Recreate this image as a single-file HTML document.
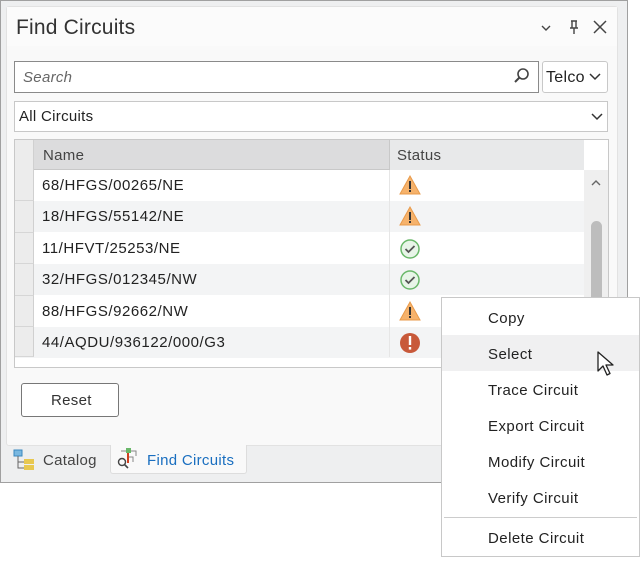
<!DOCTYPE html>
<html><head><style>
*{box-sizing:border-box;margin:0;padding:0}
body{width:641px;height:561px;background:#fff;position:relative;overflow:hidden;font-family:"Liberation Sans",sans-serif;color:#222}
.a{position:absolute}
.frame{left:0;top:0;width:628px;height:483px;background:#eeeff0;border:1px solid #a0a0a0}
.panel{left:6px;top:6px;width:612px;height:440px;background:#f9f9f9;border:1px solid #e2e2e2;border-radius:3px}
.t{font-size:15px;white-space:nowrap;letter-spacing:0.3px}
.row{left:15px;width:569px;height:31px}
.sel{left:15px;width:19px;background:#ececec;border-right:1px solid #d0d0d0;border-bottom:1px solid #d6d6d6}
.nm{left:42px;font-size:15px;letter-spacing:0.55px}
.mi{left:488px;font-size:15px;letter-spacing:0.45px}
</style></head><body>
<div class="a frame"></div>
<div class="a panel"></div>
<div class="a" style="left:7px;top:7px;width:610px;height:39px;background:#fbfbfb"></div>
<div class="a" style="left:16px;top:16px;font-size:21px;color:#333;letter-spacing:0.2px">Find Circuits</div>
<svg class="a" style="left:540px;top:18px" width="70" height="20" viewBox="0 0 70 20">
<path d="M2 8l4 4 4-4" stroke="#444" stroke-width="1.4" fill="none"/>
<path d="M31 3h6M32 3v7M36 3v7M30 10h8M34 10v6" stroke="#444" stroke-width="1.4" fill="none"/>
<path d="M54 3l12 12M66 3l-12 12" stroke="#444" stroke-width="1.5"/>
</svg>
<div class="a" style="left:14px;top:61px;width:525px;height:32px;background:#fff;border:1px solid #8a8a8a"></div>
<div class="a t" style="left:23px;top:69px;font-style:italic;color:#666">Search</div>
<svg class="a" style="left:512px;top:67px" width="18" height="18"><circle cx="11" cy="7" r="5" stroke="#444" stroke-width="1.6" fill="none"/><path d="M7.5 10.5L3 15" stroke="#444" stroke-width="2"/></svg>
<div class="a" style="left:542px;top:61px;width:66px;height:32px;background:#fff;border:1px solid #c8c8c8;border-radius:3px"></div>
<div class="a t" style="left:546px;top:69px;font-size:16px">Telco</div>
<svg class="a" style="left:589px;top:72px" width="12" height="10"><path d="M1 2l5 5 5-5" stroke="#333" stroke-width="1.5" fill="none"/></svg>
<div class="a" style="left:14px;top:101px;width:594px;height:31px;background:#fff;border:1px solid #c8c8c8"></div>
<div class="a t" style="left:19px;top:108px">All Circuits</div>
<svg class="a" style="left:591px;top:112px" width="12" height="10"><path d="M1 2l5 5 5-5" stroke="#333" stroke-width="1.5" fill="none"/></svg>
<!-- grid -->
<div class="a" style="left:14px;top:139px;width:595px;height:229px;background:#fff;border:1px solid #c8c8c8"></div>
<div class="a" style="left:15px;top:140px;width:569px;height:30px;background:#dcdcdd;border-bottom:1px solid #c8c8c8"></div>
<div class="a" style="left:15px;top:140px;width:19px;height:30px;background:#ececec;border-right:1px solid #d0d0d0"></div>
<div class="a" style="left:389px;top:140px;width:195px;height:30px;background:#e8e9ea;border-left:1px solid #c8c8c8"></div>
<div class="a t" style="left:43px;top:147px;color:#444">Name</div>
<div class="a t" style="left:397px;top:147px;color:#444">Status</div>
<div class="a row" style="top:170px;background:#fff"></div>
<div class="a row" style="top:201px;background:#f3f4f5"></div>
<div class="a row" style="top:233px;background:#fff"></div>
<div class="a row" style="top:264px;background:#f3f4f5"></div>
<div class="a row" style="top:296px;background:#fff"></div>
<div class="a row" style="top:327px;background:#f3f4f5"></div>
<div class="a" style="left:389px;top:170px;width:1px;height:187px;background:#e6e6e6"></div>
<div class="a sel" style="top:170px;height:31px"></div>
<div class="a sel" style="top:201px;height:32px"></div>
<div class="a sel" style="top:233px;height:31px"></div>
<div class="a sel" style="top:264px;height:32px"></div>
<div class="a sel" style="top:296px;height:31px"></div>
<div class="a sel" style="top:327px;height:30px"></div>
<div class="a nm" style="top:177px">68/HFGS/00265/NE</div>
<div class="a nm" style="top:208px">18/HFGS/55142/NE</div>
<div class="a nm" style="top:240px">11/HFVT/25253/NE</div>
<div class="a nm" style="top:271px">32/HFGS/012345/NW</div>
<div class="a nm" style="top:303px">88/HFGS/92662/NW</div>
<div class="a nm" style="top:334px">44/AQDU/936122/000/G3</div>
<svg class="a" style="left:398px;top:174px" width="24" height="190">
<defs>
<g id="w"><path d="M12 2L22 20H2Z" fill="#f6b26b" stroke="#e89a4a"/><rect x="11" y="7" width="2" height="8" fill="#333"/><rect x="11" y="16" width="2" height="2" fill="#333"/></g>
<g id="c"><circle cx="12" cy="12" r="9" fill="#e8f5e8" stroke="#6ab86a" stroke-width="1.5"/><path d="M7.5 12l3 3 6-6" stroke="#555" stroke-width="1.8" fill="none"/></g>
</defs>
<use href="#w" y="0"/><use href="#w" y="31"/><use href="#c" y="63"/><use href="#c" y="94"/><use href="#w" y="126"/>
<g transform="translate(0,157)"><circle cx="12" cy="12" r="10" fill="#c8593a"/><rect x="10.8" y="5" width="2.4" height="9" fill="#fff"/><rect x="10.8" y="16" width="2.4" height="2.6" fill="#fff"/></g>
</svg>
<div class="a" style="left:584px;top:170px;width:24px;height:197px;background:#efefef"></div>
<svg class="a" style="left:590px;top:178px" width="12" height="10"><path d="M2 7l4-4 4 4" stroke="#666" stroke-width="1.4" fill="none"/></svg>
<div class="a" style="left:591px;top:221px;width:11px;height:120px;background:#bdbdbd;border-radius:6px"></div>
<!-- reset -->
<div class="a" style="left:21px;top:383px;width:98px;height:34px;background:#fff;border:1px solid #777;border-radius:3px"></div>
<div class="a t" style="left:51px;top:392px;color:#333">Reset</div>
<!-- tabs -->
<div class="a" style="left:110px;top:445px;width:137px;height:29px;background:#f9f9f9;border:1px solid #ddd;border-top:none;border-radius:0 0 3px 3px"></div>
<svg class="a" style="left:13px;top:449px" width="24" height="22"><rect x="1" y="1" width="8" height="6" fill="#7ab8e0" stroke="#3a88c0"/><path d="M5 7v12h6M5 13h6" stroke="#666" fill="none"/><rect x="11" y="10" width="10" height="5" fill="#e8c850"/><rect x="11" y="16" width="10" height="5" fill="#e8c850"/></svg>
<div class="a t" style="left:43px;top:452px;color:#444">Catalog</div>
<svg class="a" style="left:117px;top:447px" width="24" height="24"><rect x="9" y="1" width="5" height="5" fill="#6ab86a"/><path d="M4 4h5M14 4h5v5M11 6v8M11 10h5v5" stroke="#888" fill="none"/><path d="M11 6v10" stroke="#d04020" stroke-width="2"/><circle cx="5" cy="15" r="3.5" stroke="#444" stroke-width="1.4" fill="none"/><path d="M7.5 17.5L11 21" stroke="#444" stroke-width="1.6"/></svg>
<div class="a t" style="left:147px;top:452px;color:#1a6fc0">Find Circuits</div>
<!-- menu -->
<div class="a" style="left:441px;top:297px;width:199px;height:260px;background:#fff;border:1px solid #c8c8c8"></div>
<div class="a" style="left:442px;top:335px;width:197px;height:36px;background:#f0f0f1"></div>
<div class="a" style="left:444px;top:517px;width:193px;height:1px;background:#ccc"></div>
<div class="a mi" style="top:310px">Copy</div>
<div class="a mi" style="top:346px">Select</div>
<div class="a mi" style="top:382px">Trace Circuit</div>
<div class="a mi" style="top:418px">Export Circuit</div>
<div class="a mi" style="top:454px">Modify Circuit</div>
<div class="a mi" style="top:490px">Verify Circuit</div>
<div class="a mi" style="top:530px">Delete Circuit</div>
<svg class="a" style="left:596px;top:350px" width="20" height="28"><path d="M2 2v19l5-5 4 9 3-1.5-4-8.5h7Z" fill="#fff" stroke="#222" stroke-width="1.3" stroke-linejoin="round"/></svg>
</body></html>
